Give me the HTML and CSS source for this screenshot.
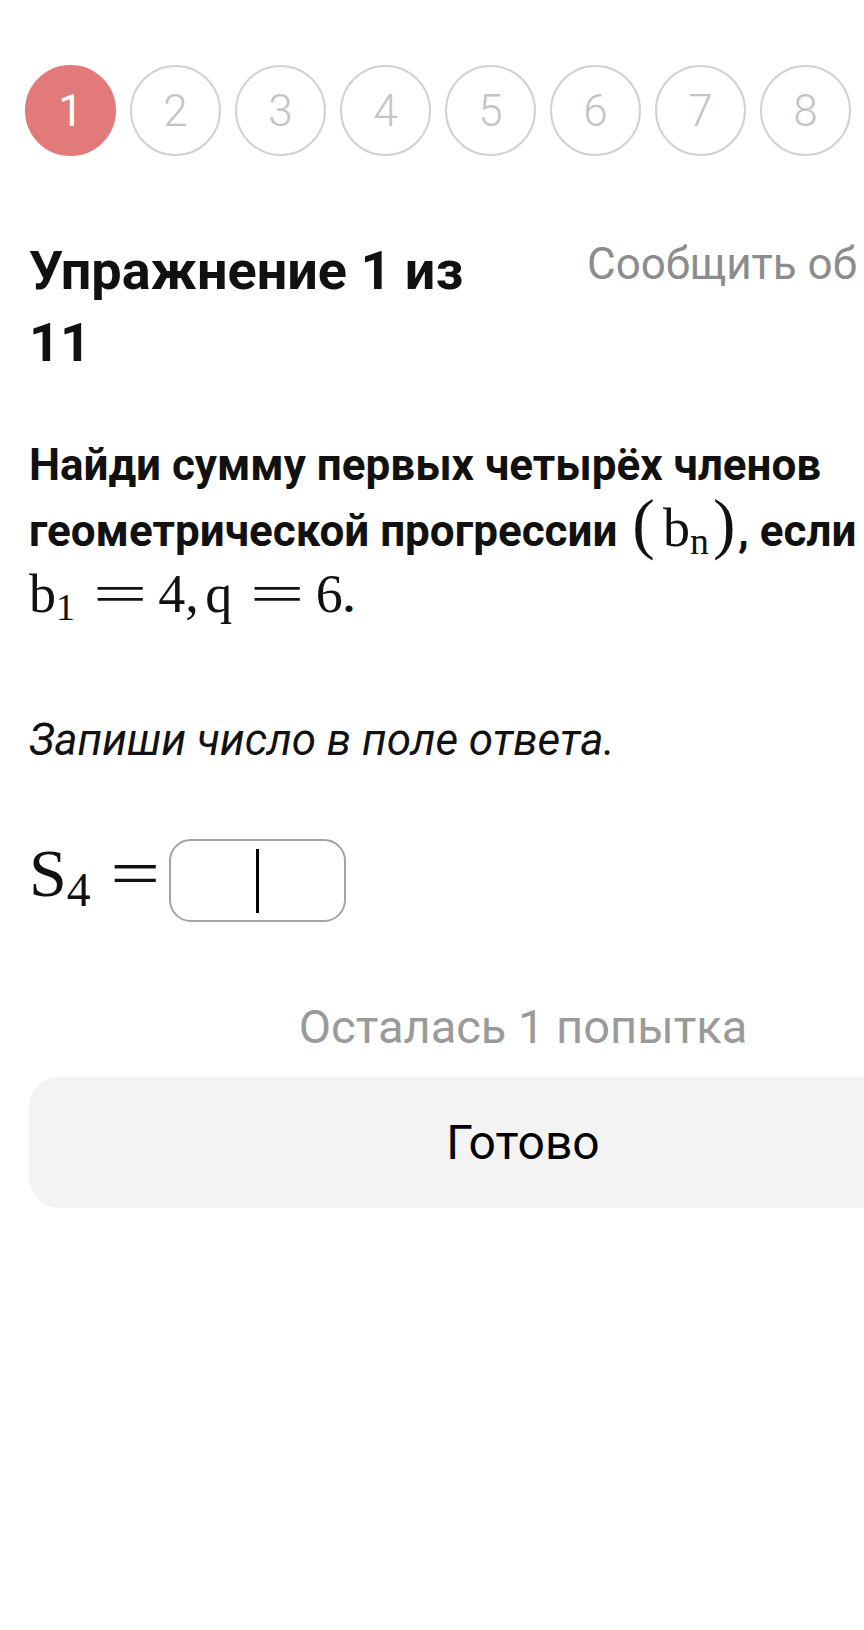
FILE: index.html
```html
<!DOCTYPE html>
<html lang="ru">
<head>
  <meta charset="UTF-8">
  <meta name="viewport" content="width=device-width, initial-scale=1.0">
  <title>Упражнение 1 из 11</title>
  <link rel="stylesheet" href="styles.css">
</head>
<body>
  <div class="page">
    <ol class="steps">
      <li class="step active">1</li>
      <li class="step">2</li>
      <li class="step">3</li>
      <li class="step">4</li>
      <li class="step">5</li>
      <li class="step">6</li>
      <li class="step">7</li>
      <li class="step">8</li>
      <li class="step">9</li>
      <li class="step">10</li>
      <li class="step">11</li>
    </ol>

    <div class="content">
      <div class="task-head">
        <h1 class="task-title">Упражнение 1 из 11</h1>
        <a class="report-link" href="#">Сообщить об ошибке</a>
      </div>

      <p class="task-text">
        Найди сумму первых четырёх членов геометрической прогрессии
        <span class="math"><span class="paren open">(</span>b<sub>n</sub><span class="paren close">)</span></span>, если
        <span class="nowrap"><span class="math">b<sub>1</sub><span class="op">=</span>4<span class="comma">,</span>q<span class="op">=</span>6</span>.</span>
      </p>

      <p class="hint">Запиши число в поле ответа.</p>

      <div class="answer-row">
        <span class="math answer-label">S<sub>4</sub><span class="op">=</span></span>
        <div class="answer-box"><span class="caret"></span></div>
      </div>

      <p class="remaining">Осталась 1 попытка</p>
      <button class="done-btn">Готово</button>
    </div>
  </div>
</body>
</html>
```

FILE: styles.css
```css
body {
  margin: 0;
  padding: 0;
  font-family: Roboto, "Noto Sans", sans-serif;
  background-color: #fff;
  color: #111;
  overflow: hidden;
}

.page {
  width: 1046px;
}

/* step circles */
.steps {
  display: flex;
  gap: 14px;
  list-style: none;
  margin: 0;
  padding: 65px 0 0 25px;
}

.step {
  flex: 0 0 91px;
  height: 91px;
  box-sizing: border-box;
  border: 2px solid #d2d2d2;
  border-radius: 50%;
  display: flex;
  align-items: center;
  justify-content: center;
  font-size: 44px;
  font-weight: 300;
  color: #c4c4c4;
}

.step.active {
  background-color: #e27a7a;
  border-color: #e27a7a;
  color: #fff;
  font-weight: 400;
}

.content {
  padding: 0 29px;
}

/* title row */
.task-head {
  display: flex;
  align-items: flex-start;
  margin-top: 79px;
}

.task-title {
  flex: 0 0 470px;
  margin: 0 88px 0 0;
  font-size: 54px;
  font-weight: 700;
  line-height: 72px;
}

.report-link {
  margin-top: 3px;
  font-size: 44px;
  line-height: 52px;
  color: #8c8c8c;
  text-decoration: none;
  white-space: nowrap;
}

/* task */
.task-text {
  margin: 53px 0 0;
  font-size: 44px;
  font-weight: 700;
  line-height: 66px;
}

.nowrap {
  white-space: nowrap;
}

.math {
  font-family: "Liberation Serif", serif;
  font-weight: 400;
  font-size: 54px;
  line-height: 0;
}

.math sub {
  font-size: 0.7em;
  vertical-align: -0.2em;
  line-height: 0;
}

.op {
  display: inline-block;
  margin: 0 0.42em 0 0.56em;
  transform: scaleX(1.8);
}

.comma {
  margin-right: 0.12em;
}

.paren {
  font-size: 1.25em;
}

.paren.open {
  margin: 0 0.12em 0 0.06em;
}

.paren.close {
  margin: 0 0.04em 0 0.06em;
}

.hint {
  margin: 77px 0 0;
  font-size: 44px;
  font-style: italic;
  line-height: 66px;
}

/* answer */
.answer-row {
  display: flex;
  align-items: center;
  margin-top: 66px;
}

.answer-label {
  font-size: 68px;
  line-height: 1;
  margin-bottom: 15px;
}

.answer-label .op {
  margin: 0 0.22em 0 0.37em;
  transform: scaleX(1.3);
}

.answer-box {
  width: 177px;
  height: 83px;
  box-sizing: border-box;
  border: 2px solid #a3a3a3;
  border-radius: 22px;
  display: flex;
  align-items: center;
  justify-content: center;
}

.caret {
  width: 3px;
  height: 64px;
  background-color: #000;
}

.remaining {
  margin: 77px 0 0;
  text-align: center;
  font-size: 47px;
  line-height: 56px;
  color: #9a9a9a;
}

.done-btn {
  display: block;
  width: 100%;
  height: 131px;
  margin-top: 22px;
  border: none;
  border-radius: 30px;
  background-color: #f3f3f3;
  font-family: Roboto, "Noto Sans", sans-serif;
  font-size: 48px;
  color: #000;
  cursor: pointer;
}
```
